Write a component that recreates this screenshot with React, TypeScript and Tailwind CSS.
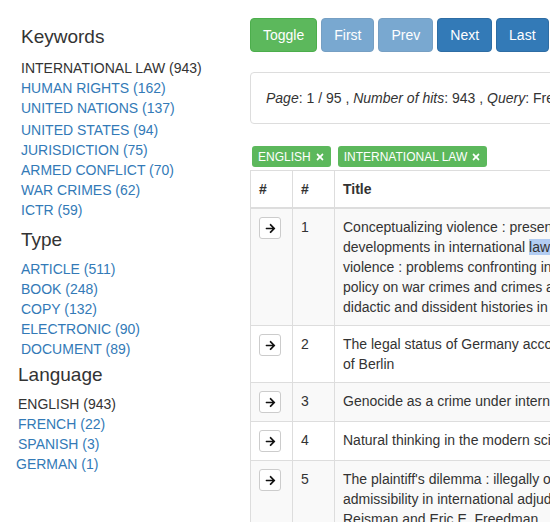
import React from "react";
import { FaArrowRight, FaTimes } from "react-icons/fa";

const font = { fontFamily: '"Liberation Sans", Arial, sans-serif' };

function Item({ text, active, x = "pl-[21px]" }: { text: string; active?: boolean; x?: string }) {
  return (
    <div className={`${x} h-[20px] leading-[20px] text-[14px] ${active ? "text-[#333]" : "text-[#337ab7]"}`}>{text}</div>
  );
}

const rows: { n: number; lines: React.ReactNode[] }[] = [
  {
    n: 1,
    lines: [
      "Conceptualizing violence : present and future developments",
      <>developments in international <span className="bg-[#b3cdf2]">law</span> : panel I: human rights and international</>,
      "violence : problems confronting international",
      "policy on war crimes and crimes against humanity :",
      "didactic and dissident histories in war crimes trials",
    ],
  },
  { n: 2, lines: ["The legal status of Germany according to the declaration", "of Berlin"] },
  { n: 3, lines: ["Genocide as a crime under international law"] },
  { n: 4, lines: ["Natural thinking in the modern science of law"] },
  {
    n: 5,
    lines: [
      "The plaintiff's dilemma : illegally obtained evidence and",
      "admissibility in international adjudication / W. Michael",
      "Reisman and Eric E. Freedman",
    ],
  },
];

export default function App() {
  return (
    <div className="w-[550px] h-[522px] overflow-hidden bg-white text-[#333]" style={font}>
      <div className="flex w-[1000px]">
        {/* Left column */}
        <div className="w-[250px] shrink-0 flex flex-col">
          <div className="pl-[21px] mt-[27px] h-[20px] leading-[20px] text-[19px] text-[#333]">Keywords</div>
          <div className="mt-[11px]">
            <Item text="INTERNATIONAL LAW (943)" active />
            <Item text="HUMAN RIGHTS (162)" />
            <Item text="UNITED NATIONS (137)" />
            <div className="h-[2px]" />
            <Item text="UNITED STATES (94)" />
            <Item text="JURISDICTION (75)" />
            <Item text="ARMED CONFLICT (70)" />
            <Item text="WAR CRIMES (62)" />
            <Item text="ICTR (59)" />
          </div>
          <div className="pl-[21px] mt-[10px] h-[20px] leading-[20px] text-[19px]">Type</div>
          <div className="mt-[9px]">
            <Item text="ARTICLE (511)" />
            <Item text="BOOK (248)" />
            <Item text="COPY (132)" />
            <Item text="ELECTRONIC (90)" />
            <Item text="DOCUMENT (89)" />
          </div>
          <div className="pl-[18px] mt-[6px] h-[20px] leading-[20px] text-[19px]">Language</div>
          <div className="mt-[9px]">
            <Item text="ENGLISH (943)" active x="pl-[18px]" />
            <Item text="FRENCH (22)" x="pl-[18px]" />
            <Item text="SPANISH (3)" x="pl-[18px]" />
            <Item text="GERMAN (1)" x="pl-[16px]" />
          </div>
        </div>

        {/* Right column */}
        <div className="flex-1 flex flex-col pt-[18px]">
          <div className="flex gap-[4px] text-[14px] leading-[20px] text-white">
            <button className="px-[12px] py-[6px] rounded-[4px] bg-[#5cb85c] border border-[#4cae4c]">Toggle</button>
            <button className="px-[12px] py-[6px] rounded-[4px] bg-[#337ab7] border border-[#2e6da4] opacity-65">First</button>
            <button className="px-[12px] py-[6px] rounded-[4px] bg-[#337ab7] border border-[#2e6da4] opacity-65">Prev</button>
            <button className="px-[12px] py-[6px] rounded-[4px] bg-[#337ab7] border border-[#2e6da4]">Next</button>
            <button className="px-[12px] py-[6px] rounded-[4px] bg-[#337ab7] border border-[#2e6da4]">Last</button>
          </div>

          <div className="mt-[20px] border border-[#ddd] rounded-[4px] p-[15px] text-[14px] leading-[20px] whitespace-nowrap">
            <i>Page</i>: 1 / 95 , <i>Number of hits</i>: 943 , <i>Query</i>: Free text search
          </div>

          <div className="mt-[22px] flex gap-[7px] pl-[2px]">
            <span className="flex items-center gap-[4px] h-[21px] px-[6px] rounded-[3px] bg-[#5cb85c] text-white text-[12px]">
              ENGLISH <FaTimes className="w-[10px] h-[10px]" />
            </span>
            <span className="flex items-center gap-[4px] h-[21px] px-[6px] rounded-[3px] bg-[#5cb85c] text-white text-[12px]">
              INTERNATIONAL LAW <FaTimes className="w-[10px] h-[10px]" />
            </span>
          </div>

          <table className="mt-[3px] border-collapse border border-[#ddd] text-[14px] leading-[20px] w-[700px]">
            <thead>
              <tr>
                <th className="w-[42px] p-[8px] text-left font-bold border border-[#ddd] border-b-2">#</th>
                <th className="w-[42px] p-[8px] text-left font-bold border border-[#ddd] border-b-2">#</th>
                <th className="p-[8px] text-left font-bold border border-[#ddd] border-b-2">Title</th>
              </tr>
            </thead>
            <tbody>
              {rows.map((r) => (
                <tr key={r.n} className={r.n % 2 === 1 ? "bg-[#f9f9f9]" : "bg-white"}>
                  <td className="p-[8px] align-top border border-[#ddd]">
                    <div className="w-[22px] h-[22px] flex items-center justify-center border border-[#ccc] rounded-[3px] bg-white">
                      <FaArrowRight className="w-[11px] h-[11px] text-[#111]" />
                    </div>
                  </td>
                  <td className="p-[8px] align-top border border-[#ddd]">{r.n}</td>
                  <td className="p-[8px] align-top border border-[#ddd] whitespace-nowrap">
                    {r.lines.map((l, i) => (
                      <div key={i}>{l}</div>
                    ))}
                  </td>
                </tr>
              ))}
            </tbody>
          </table>
        </div>
      </div>
    </div>
  );
}
